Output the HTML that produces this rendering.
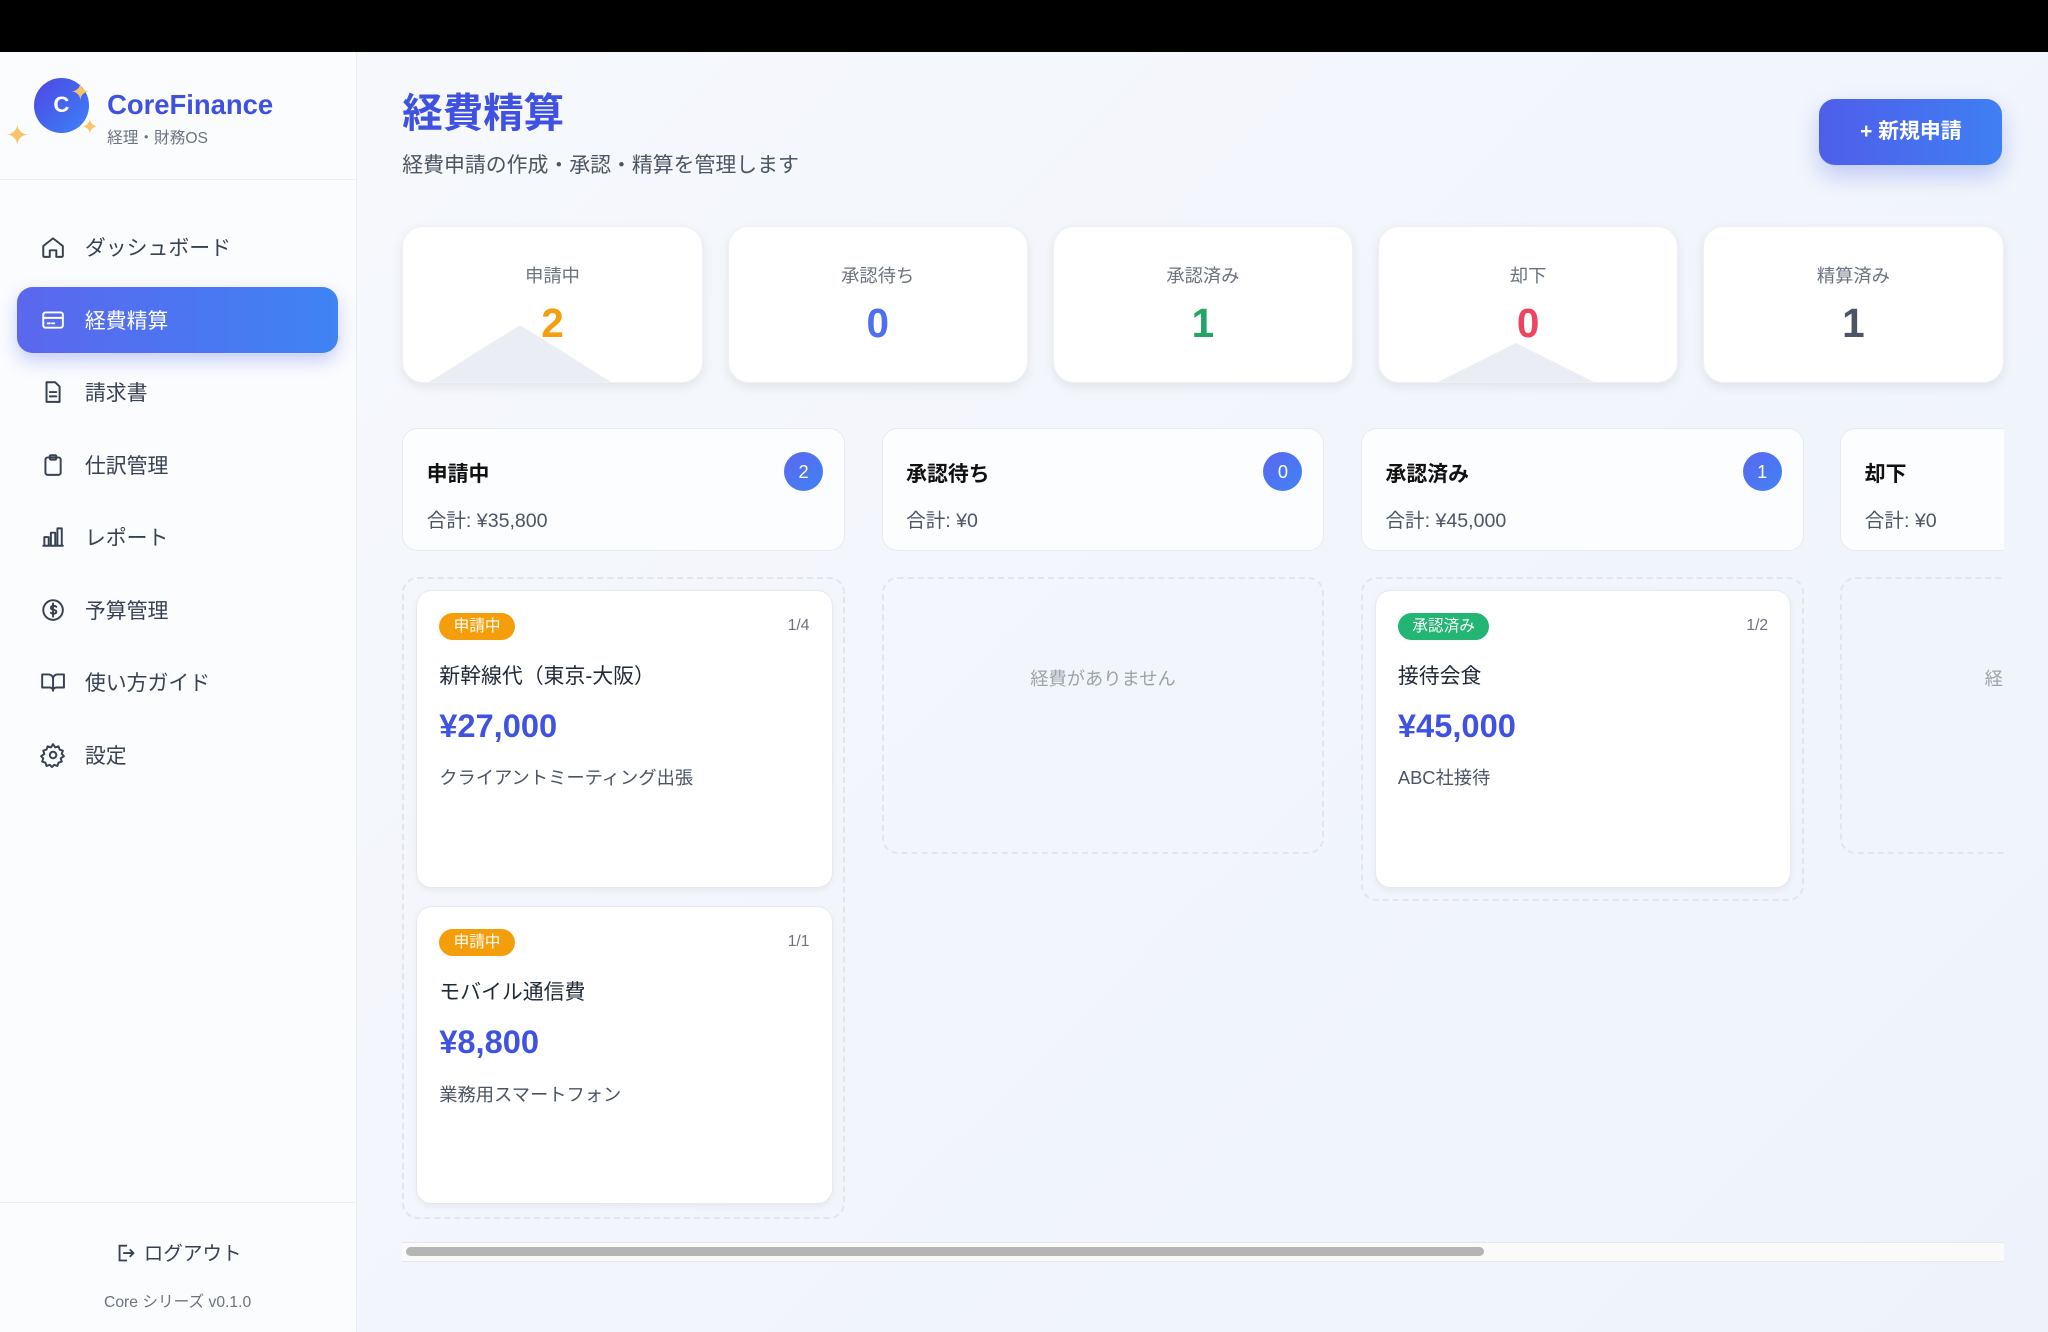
<!DOCTYPE html>
<html><head><meta charset="utf-8"><style>
*{box-sizing:border-box;margin:0;padding:0}
html,body{width:2048px;height:1332px;overflow:hidden;background:#000}
#r{zoom:1.306122;width:1568px;height:1020px;position:relative;font-family:"Liberation Sans","Noto Sans CJK JP",sans-serif;color:#1f2937}
.top{position:absolute;left:0;top:0;width:1568px;height:40px;background:#000}
.side{position:absolute;left:0;top:40px;width:273px;height:980px;background:#fbfcfe;border-right:1px solid #e8ecf3}
.main{position:absolute;left:273px;top:40px;width:1295px;height:980px;background:linear-gradient(135deg,#f6f8fc,#eef3fb)}
.logo{position:absolute;left:26px;top:20px;width:42px;height:42px;border-radius:50%;background:linear-gradient(135deg,#4f46e5,#3b82f6);color:#fff;font-weight:bold;font-size:17px;text-align:center;line-height:42px}
.brand{position:absolute;left:82px;top:28px;font-size:21px;font-weight:bold;color:#3f51e0}
.sub{position:absolute;left:82px;top:56px;font-size:12px;color:#6b7280}
.hr{position:absolute;left:0;width:272px;border-top:1px solid #e9edf3}
.nav{position:absolute;left:13px;width:246px;height:50px;display:flex;align-items:center;padding-left:18px;font-size:16px;color:#374151;border-radius:12px}
.nav svg{width:20px;height:20px;margin-right:14px;fill:none;stroke:#374151;stroke-width:1.8;stroke-linecap:round;stroke-linejoin:round}
.nav.act{background:linear-gradient(90deg,#5b67ee,#3f83f4);color:#fff;box-shadow:0 6px 14px rgba(79,100,240,.3)}
.nav.act svg{stroke:#fff}
.spark{position:absolute;color:#f8c46a;font-size:14px}
h1{position:absolute;left:35px;top:21px;font-size:31px;color:#3f51e0;font-weight:bold}
.desc{position:absolute;left:35px;top:74px;font-size:16px;color:#4b5563}
.btn{position:absolute;left:1120px;top:36px;width:140px;height:50px;border-radius:12px;background:linear-gradient(90deg,#4f5ee9,#3f7ff3);color:#fff;font-weight:bold;font-size:16px;text-align:center;line-height:50px;box-shadow:0 8px 18px rgba(70,100,240,.3)}
.stat{position:absolute;top:133px;width:230px;height:120px;background:#fff;border-radius:16px;box-shadow:0 3px 8px rgba(0,0,0,.08);border:1px solid #eef0f4;text-align:center;overflow:hidden}
.stat .l{margin-top:27px;font-size:14px;color:#6b7280}
.stat .n{margin-top:9px;font-size:31px;font-weight:bold}
.tri{position:absolute;left:20px;bottom:0;width:0;height:0;border-left:70px solid transparent;border-right:70px solid transparent;border-bottom:44px solid #eaedf3}
.clip{position:absolute;left:35px;top:288px;width:1226px;height:620px;overflow:hidden}
.ch{position:absolute;top:0;width:339px;height:94px;background:#fcfdff;border:1px solid #e7eaf0;border-radius:12px}
.ch b{position:absolute;left:18px;top:22px;font-size:16px;color:#111}
.ch span.t{position:absolute;left:18px;top:57px;font-size:15px;color:#4b5563}
.ch .bd{position:absolute;right:16px;top:17px;width:30px;height:30px;border-radius:50%;background:linear-gradient(135deg,#5b67ee,#3f83f4);color:#fff;font-size:14px;text-align:center;line-height:30px}
.col{position:absolute;top:114px;width:339px;border:2px dashed #e1e5ec;border-radius:12px}
.card{position:absolute;left:9px;width:319px;height:228px;background:#fff;border:1px solid #e6e9ef;border-radius:12px;box-shadow:0 2px 5px rgba(0,0,0,.05)}
.pill{position:absolute;left:17px;top:17px;height:21px;padding:0 11px;border-radius:11px;color:#fff;font-size:12px;line-height:21px}
.pg{position:absolute;right:17px;top:20px;font-size:12px;color:#6b7280}
.ti{position:absolute;left:17px;top:53px;font-size:16px;color:#1f2937}
.am{position:absolute;left:17px;top:89px;font-size:25px;font-weight:bold;color:#4052e0}
.no{position:absolute;left:17px;top:133px;font-size:14px;color:#4b5563}
</style></head><body><div id="r">
<div class="top"></div>
<div class="side">
 <div class="logo">C</div>
 <span class="spark" style="left:54px;top:20px;font-size:18px">✦</span>
 <span class="spark" style="left:4px;top:50px;font-size:22px">✦</span>
 <span class="spark" style="left:62px;top:48px;font-size:16px">✦</span>
 <div class="brand">CoreFinance</div>
 <div class="sub">経理・財務OS</div>
 <div class="hr" style="top:97px"></div>
 <div class="nav" style="top:124px"><svg viewBox="0 0 24 24"><path d="M3 11l9-7 9 7v9a1 1 0 0 1-1 1h-5v-6h-6v6H4a1 1 0 0 1-1-1z"/></svg>ダッシュボード</div>
 <div class="nav act" style="top:180px"><svg viewBox="0 0 24 24"><rect x="3" y="5" width="18" height="14" rx="2"/><path d="M3 10h18M7 15h2M11 15h2"/></svg>経費精算</div>
 <div class="nav" style="top:235px"><svg viewBox="0 0 24 24"><path d="M6 3h8l4 4v14H6z"/><path d="M9 12h6M9 16h6"/></svg>請求書</div>
 <div class="nav" style="top:291px"><svg viewBox="0 0 24 24"><rect x="5" y="5" width="14" height="16" rx="2"/><rect x="9" y="3" width="6" height="4" rx="1"/></svg>仕訳管理</div>
 <div class="nav" style="top:346px"><svg viewBox="0 0 24 24"><path d="M4 20V12h4v8zM10 20V8h4v12zM16 20V4h4v16zM3 20h18"/></svg>レポート</div>
 <div class="nav" style="top:402px"><svg viewBox="0 0 24 24"><circle cx="12" cy="12" r="9"/><path d="M15 9c-1-1-5-1.5-5 1s5 1 5 3.5-4 2-5 1M12 6v12"/></svg>予算管理</div>
 <div class="nav" style="top:457px"><svg viewBox="0 0 24 24"><path d="M2 5h6a4 4 0 0 1 4 4v11a3 3 0 0 0-3-3H2zM22 5h-6a4 4 0 0 0-4 4v11a3 3 0 0 1 3-3h7z"/></svg>使い方ガイド</div>
 <div class="nav" style="top:513px"><svg viewBox="0 0 24 24"><circle cx="12" cy="12" r="3"/><path d="M12 2l2 3 3-1 1 3 3 1-1 3 2 2-3 2 1 3-3 1-1 3-3-1-2 2-2-2-3 1-1-3-3-1 1-3-2-2 3-2-1-3 3-1 1-3 3 1z"/></svg>設定</div>
 <div class="hr" style="top:880px"></div>
 <div style="position:absolute;left:0;width:272px;top:907px;text-align:center;font-size:15px;color:#374151">
  <svg viewBox="0 0 24 24" style="width:17px;height:17px;vertical-align:-3px;margin-right:6px;fill:none;stroke:#374151;stroke-width:2"><path d="M14 4H6v16h8M10 12h11M17 8l4 4-4 4"/></svg>ログアウト</div>
 <div style="position:absolute;left:0;width:272px;top:947px;text-align:center;font-size:12px;color:#6b7280">Core シリーズ v0.1.0</div>
</div>
<div class="main">
 <h1>経費精算</h1>
 <div class="desc">経費申請の作成・承認・精算を管理します</div>
 <div class="btn">+ 新規申請</div>
 <div class="stat" style="left:35px"><div class="tri"></div><div class="l">申請中</div><div class="n" style="color:#f59e0b;position:relative">2</div></div>
 <div class="stat" style="left:284px"><div class="l">承認待ち</div><div class="n" style="color:#4f6ff0">0</div></div>
 <div class="stat" style="left:533px"><div class="l">承認済み</div><div class="n" style="color:#22a565">1</div></div>
 <div class="stat" style="left:782px"><div class="tri" style="left:45px;border-left-width:60px;border-right-width:60px;border-bottom-width:30px"></div><div class="l">却下</div><div class="n" style="color:#ef4460;position:relative">0</div></div>
 <div class="stat" style="left:1031px"><div class="l">精算済み</div><div class="n" style="color:#4b5563">1</div></div>
 <div class="clip">
  <div class="ch" style="left:0"><b>申請中</b><span class="t">合計: ¥35,800</span><span class="bd">2</span></div>
  <div class="ch" style="left:367px"><b>承認待ち</b><span class="t">合計: ¥0</span><span class="bd">0</span></div>
  <div class="ch" style="left:734px"><b>承認済み</b><span class="t">合計: ¥45,000</span><span class="bd">1</span></div>
  <div class="ch" style="left:1101px"><b>却下</b><span class="t">合計: ¥0</span></div>
  <div class="col" style="left:0;height:491px">
   <div class="card" style="top:8px"><span class="pill" style="background:#f59e0b">申請中</span><span class="pg">1/4</span><div class="ti">新幹線代（東京-大阪）</div><div class="am">¥27,000</div><div class="no">クライアントミーティング出張</div></div>
   <div class="card" style="top:250px"><span class="pill" style="background:#f59e0b">申請中</span><span class="pg">1/1</span><div class="ti">モバイル通信費</div><div class="am">¥8,800</div><div class="no">業務用スマートフォン</div></div>
  </div>
  <div class="col" style="left:367px;height:212px"><div style="text-align:center;margin-top:66px;font-size:14px;color:#9ca3af">経費がありません</div></div>
  <div class="col" style="left:734px;height:248px">
   <div class="card" style="top:8px"><span class="pill" style="background:#22b573">承認済み</span><span class="pg">1/2</span><div class="ti">接待会食</div><div class="am">¥45,000</div><div class="no">ABC社接待</div></div>
  </div>
  <div class="col" style="left:1101px;height:212px"><div style="position:absolute;left:109px;top:66px;font-size:14px;color:#9ca3af">経</div></div>
 </div>
 <div style="position:absolute;left:35px;top:911px;width:1226px;height:15px;background:#fafafa;border-top:1px solid #e5e7eb;border-bottom:1px solid #e5e7eb"></div>
 <div style="position:absolute;left:38px;top:915px;width:825px;height:7px;border-radius:4px;background:#b5b5b5"></div>
</div>
</div></body></html>
